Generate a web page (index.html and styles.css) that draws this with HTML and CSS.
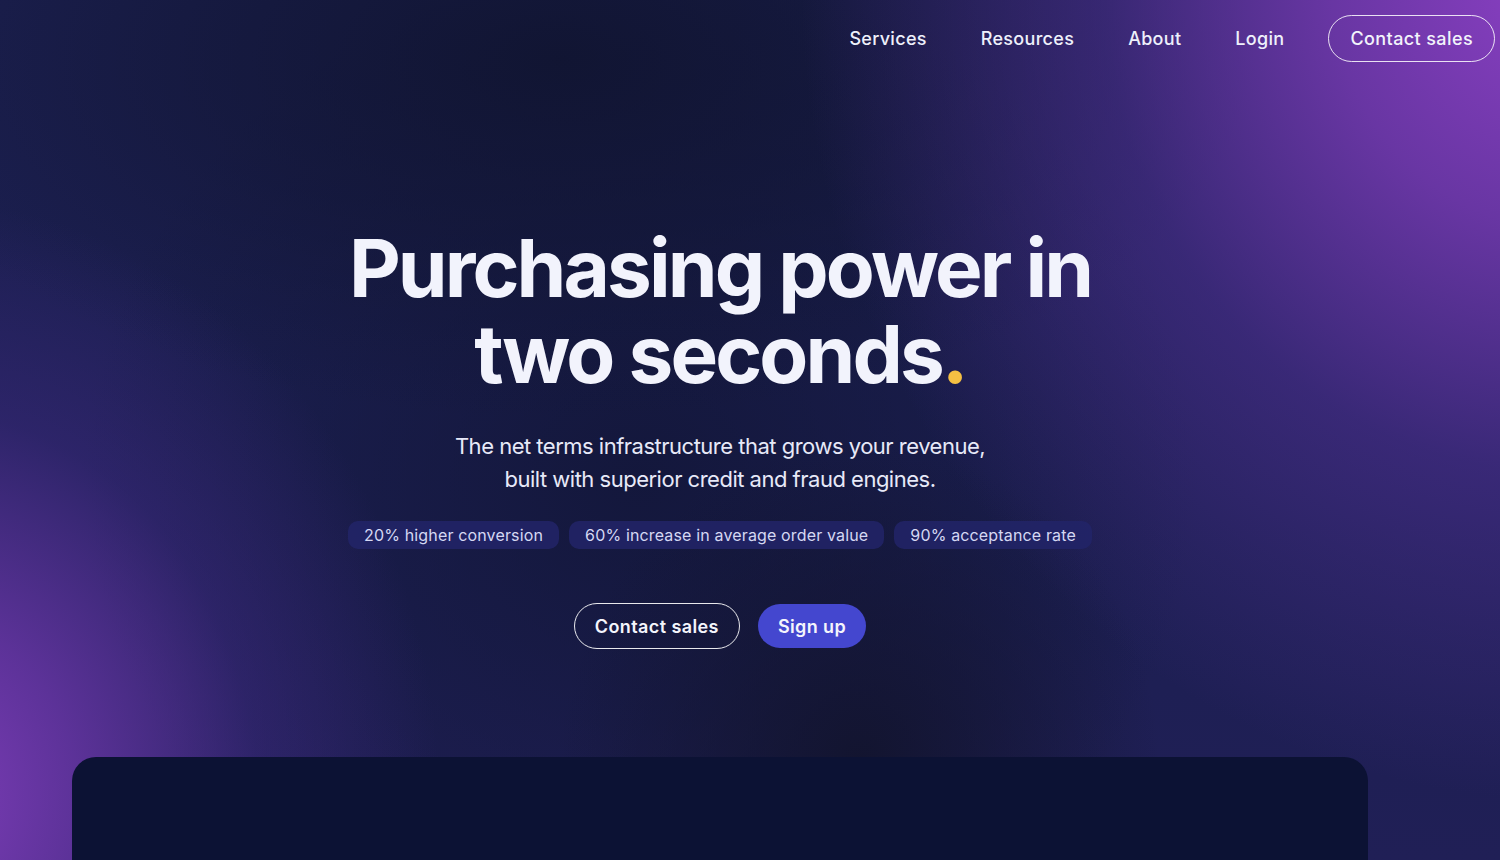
FILE: index.html
```html
<!DOCTYPE html>
<html lang="en">
<head>
<meta charset="utf-8">
<title>Purchasing power in two seconds</title>
<link rel="stylesheet" href="styles.css">
</head>
<body>
<div class="page">
  <header class="topbar">
    <nav class="nav">
      <a class="nav-link" href="#">Services</a>
      <a class="nav-link" href="#">Resources</a>
      <a class="nav-link" href="#">About</a>
      <a class="nav-link" href="#">Login</a>
      <a class="nav-cta" href="#">Contact sales</a>
    </nav>
  </header>
  <main class="hero">
    <h1 class="title">Purchasing power in<br>two seconds<span class="dot">.</span></h1>
    <p class="subtitle">The net terms infrastructure that grows your revenue,<br>built with superior credit and fraud engines.</p>
    <ul class="stats">
      <li class="chip">20% higher conversion</li>
      <li class="chip">60% increase in average order value</li>
      <li class="chip">90% acceptance rate</li>
    </ul>
    <div class="actions">
      <a class="btn btn-outline" href="#">Contact sales</a>
      <a class="btn btn-primary" href="#">Sign up</a>
    </div>
    <section class="panel"></section>
  </main>
</div>
</body>
</html>
```
FILE: styles.css
```css
* { box-sizing: border-box; }
html, body { margin: 0; padding: 0; }
body {
  width: 1500px;
  height: 860px;
  overflow: hidden;
  font-family: "Inter", "Noto Sans", sans-serif;
  color: #f2f3fb;
  background-color: #181c48;
  background-image:
    radial-gradient(ellipse 760px 820px at 1560px -20px, rgba(140, 64, 196, 1) 0%, rgba(118, 58, 178, 0.85) 30%, rgba(86, 50, 156, 0.5) 60%, rgba(60, 40, 130, 0) 100%),
    radial-gradient(ellipse 520px 600px at -80px 800px, rgba(128, 62, 186, 1) 0%, rgba(108, 55, 170, 0.8) 30%, rgba(70, 44, 140, 0.4) 65%, rgba(40, 35, 100, 0) 100%),
    radial-gradient(ellipse 700px 360px at 560px 60px, rgba(16, 20, 48, 0.9) 0%, rgba(16, 20, 48, 0.5) 50%, rgba(16, 20, 48, 0) 100%),
    radial-gradient(ellipse 300px 320px at 860px 760px, rgba(18, 20, 46, 0.95) 0%, rgba(18, 20, 46, 0) 100%),
    radial-gradient(ellipse 560px 520px at 640px 480px, rgba(18, 22, 56, 0.85) 0%, rgba(18, 22, 56, 0) 100%),
    linear-gradient(180deg, #1b1f4f 0%, #1c1f52 60%, #201f56 100%);
}
a { color: inherit; text-decoration: none; }

.page { width: 1500px; }

.topbar {
  display: flex;
  justify-content: flex-end;
  padding: 15px 5px 0 0;
}
.nav {
  display: flex;
  align-items: center;
  gap: 54px;
}
.nav-link {
  font-size: 18px;
  font-weight: 500;
  letter-spacing: 0.3px;
  color: #eef0fb;
}
.nav-cta {
  display: inline-flex;
  align-items: center;
  height: 47px;
  padding: 0 21px;
  border: 1px solid rgba(255, 255, 255, 0.85);
  border-radius: 24px;
  font-size: 18px;
  font-weight: 500;
  letter-spacing: 0.4px;
  margin-left: -10px;
}

.hero {
  width: 1440px;
  display: flex;
  flex-direction: column;
  align-items: center;
  padding: 0 72px;
}
.title {
  margin: 163px 0 0;
  font-size: 80px;
  line-height: 86px;
  font-weight: 700;
  letter-spacing: -2.9px;
  text-align: center;
  color: #f2f3fc;
}
.dot { color: #f5c043; }

.subtitle {
  margin: 33px 0 0;
  font-size: 22px;
  line-height: 33px;
  font-weight: 400;
  letter-spacing: -0.5px;
  text-align: center;
  color: #e7e9f8;
}

.stats {
  list-style: none;
  margin: 25px 0 0;
  padding: 0;
  display: flex;
  gap: 10px;
}
.chip {
  height: 28px;
  display: flex;
  align-items: center;
  padding: 0 16px;
  border-radius: 10px;
  background: rgba(34, 36, 104, 0.85);
  font-size: 16px;
  letter-spacing: 0.15px;
  color: #d5d8f3;
}

.actions {
  margin-top: 54px;
  display: flex;
  gap: 18px;
  align-items: center;
}
.btn {
  height: 46px;
  display: inline-flex;
  align-items: center;
  padding: 0 20px;
  border-radius: 23px;
  font-size: 18px;
  font-weight: 600;
  letter-spacing: 0.4px;
}
.btn-outline {
  border: 1px solid rgba(255, 255, 255, 0.9);
  color: #f4f5fc;
}
.btn-primary {
  height: 44px;
  background: #4447cf;
  color: #f4f5fc;
}

.panel {
  margin-top: 108px;
  width: 1296px;
  height: 103px;
  border-radius: 24px 24px 0 0;
  background: #0c1234;
}
```
